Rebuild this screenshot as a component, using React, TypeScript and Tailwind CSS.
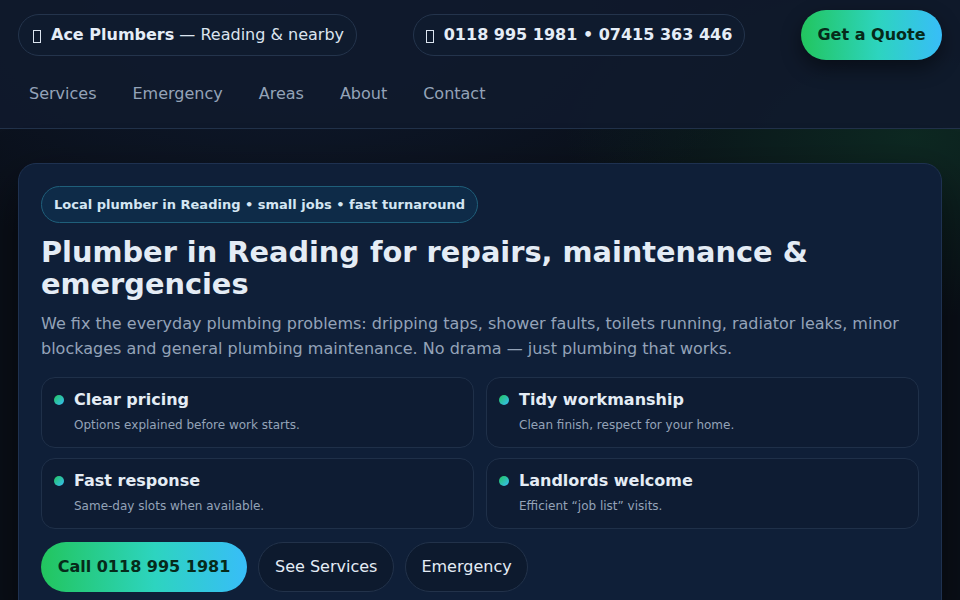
import React from "react";

const features = [
  { t: "Clear pricing", d: "Options explained before work starts." },
  { t: "Tidy workmanship", d: "Clean finish, respect for your home." },
  { t: "Fast response", d: "Same-day slots when available." },
  { t: "Landlords welcome", d: "Efficient \u201cjob list\u201d visits." },
];

function Tofu() {
  return <span className="inline-block w-[8px] h-[13px] border border-[#dbe4ef] mr-[10px] translate-y-[1px]"></span>;
}

export default function App() {
  return (
    <div
      className="min-h-[600px] w-full font-['DejaVu_Sans',sans-serif] text-[#e5edf7] overflow-hidden"
      style={{
        background:
          "radial-gradient(500px 260px at 95% 22%, rgba(34,197,94,0.14), transparent 70%), radial-gradient(700px 400px at 30% 0%, rgba(30,58,110,0.3), transparent 70%), #0a0f18",
      }}
    >
      <header className="bg-[#0f1a2c]/90 border-b border-[#22324a] px-[18px] pt-[10px] h-[129px]">
        <div className="flex items-center justify-between">
          <div className="flex items-center h-[42px] pl-[14px] pr-[12px] rounded-full border border-[#24344c] bg-[#0f1b2e] text-[16px]">
            <Tofu />
            <b className="font-bold">Ace Plumbers</b>
            <span className="text-[#dbe4ef]">&nbsp;— Reading &amp; nearby</span>
          </div>
          <div className="flex items-center h-[42px] px-[12px] rounded-full border border-[#24344c] bg-[#0f1b2e] text-[16px] font-bold">
            <Tofu />
            0118 995 1981 • 07415 363 446
          </div>
          <div className="flex items-center justify-center h-[50px] w-[141px] rounded-full bg-[linear-gradient(90deg,#22c55e,#2dd4bf_55%,#38bdf8)] text-[#062a1a] font-bold text-[16px] shadow-[0_8px_20px_rgba(0,0,0,0.45)]">
            Get a Quote
          </div>
        </div>
        <nav className="flex items-center gap-[14px] mt-[18px] text-[16px] text-[#94a3b8]">
          {["Services", "Emergency", "Areas", "About", "Contact"].map((n) => (
            <span key={n} className="px-[11px] py-[4px]">
              {n}
            </span>
          ))}
        </nav>
      </header>

      <main className="px-[18px] pt-[34px]">
        <section className="rounded-[18px] border border-[#1e3150] bg-[#0f1f38] px-[22px] pt-[22px] pb-[30px] shadow-[0_20px_50px_rgba(0,0,0,0.5)]">
          <div className="inline-flex items-center h-[37px] px-[12px] rounded-full border border-[#1f5f7a] bg-[#0e2b48] text-[13px] font-bold text-[#d4e6f3]">
            Local plumber in Reading • small jobs • fast turnaround
          </div>
          <h1 className="mt-[13px] text-[28.8px] leading-[32px] font-bold text-[#e4ecf5]">
            Plumber in Reading for repairs, maintenance &amp; emergencies
          </h1>
          <p className="mt-[11px] text-[16px] leading-[25px] text-[#94a3b8] pr-[10px]">
            We fix the everyday plumbing problems: dripping taps, shower faults, toilets running, radiator leaks, minor
            blockages and general plumbing maintenance. No drama — just plumbing that works.
          </p>
          <div className="grid grid-cols-2 gap-x-[12px] gap-y-[10px] mt-[16px]">
            {features.map((f) => (
              <div key={f.t} className="h-[71px] rounded-[14px] border border-[#1f3049] bg-[#0e1c33] px-[12px] pt-[10px]">
                <div className="flex items-center">
                  <span className="w-[10px] h-[10px] rounded-full bg-[linear-gradient(135deg,#22c55e,#38bdf8)] mr-[10px]"></span>
                  <span className="text-[16px] font-bold text-[#e4ecf5]">{f.t}</span>
                </div>
                <div className="ml-[20px] mt-[4px] text-[12px] text-[#94a3b8]">{f.d}</div>
              </div>
            ))}
          </div>
          <div className="flex items-center gap-[11px] mt-[13px]">
            <div className="flex items-center justify-center h-[50px] w-[206px] rounded-full bg-[linear-gradient(90deg,#22c55e,#2dd4bf_55%,#38bdf8)] text-[#062a1a] font-bold text-[16px]">
              Call 0118 995 1981
            </div>
            <div className="flex items-center justify-center h-[50px] px-[16px] rounded-full border border-[#22324a] bg-[#0d1a2e] text-[16px] text-[#e4ecf5]">
              See Services
            </div>
            <div className="flex items-center justify-center h-[50px] px-[15px] rounded-full border border-[#22324a] bg-[#0d1a2e] text-[16px] text-[#e4ecf5]">
              Emergency
            </div>
          </div>
        </section>
      </main>
    </div>
  );
}
